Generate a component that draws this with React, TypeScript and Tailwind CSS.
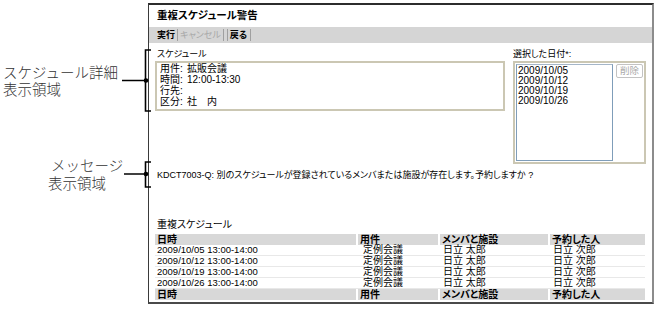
import React from "react";

const JP = "font-['Liberation_Sans','Noto_Sans_CJK_JP',sans-serif] [font-feature-settings:'palt']";

const rows = [
  ["2009/10/05 13:00-14:00", "定例会議", "日立 太郎", "日立 次郎"],
  ["2009/10/12 13:00-14:00", "定例会議", "日立 太郎", "日立 次郎"],
  ["2009/10/19 13:00-14:00", "定例会議", "日立 太郎", "日立 次郎"],
  ["2009/10/26 13:00-14:00", "定例会議", "日立 太郎", "日立 次郎"],
];

function HeaderRow() {
  return (
    <div className="grid grid-cols-[201px_80px_108px_95px] gap-x-[2px] h-[11px] leading-[11px] font-bold">
      <div className="bg-[#d8d8d8] pl-[2px]">日時</div>
      <div className="bg-[#d8d8d8] pl-[2px]">用件</div>
      <div className="bg-[#d8d8d8] pl-[2px]">メンバと施設</div>
      <div className="bg-[#d8d8d8] pl-[2px]">予約した人</div>
    </div>
  );
}

export default function App() {
  return (
    <div className={`w-[656px] h-[316px] bg-white flex text-black overflow-hidden ${JP}`}>
      {/* annotation column */}
      <div className="w-[148px] shrink-0 flex flex-col pt-[49px]">
        <div className="flex h-[63px] items-center">
          <div className="w-[120px] pl-[3px] whitespace-nowrap text-[14.5px] leading-[16.5px] text-[#333] font-light font-['Noto_Sans_CJK_JP',sans-serif] [font-feature-settings:normal]">
            スケジュール詳細
            <br />
            表示領域
          </div>
          <svg width="28" height="63" viewBox="0 0 28 63" overflow="visible" className="relative z-10">
            <path d="M2 31.5 H26" stroke="#000" strokeWidth="1.5" fill="none" />
            <circle cx="26" cy="31.5" r="2.3" fill="#000" />
            <path d="M31 1 H25.5 V62 H31" stroke="#000" strokeWidth="1.6" fill="none" />
          </svg>
        </div>
        <div className="flex h-[34px] items-center mt-[45px]">
          <div className="w-[120px] pl-[48px] whitespace-nowrap text-[14.5px] leading-[18px] text-[#333] font-light font-['Noto_Sans_CJK_JP',sans-serif] [font-feature-settings:normal]">
            <span className="pl-[3px]">メッセージ</span>
            <br />
            表示領域
          </div>
          <svg width="28" height="34" viewBox="0 0 28 34" overflow="visible" className="relative z-10">
            <path d="M4 17 H26" stroke="#000" strokeWidth="1.5" fill="none" />
            <circle cx="26" cy="17" r="2.3" fill="#000" />
            <path d="M31 5 H25.5 V30 H31" stroke="#000" strokeWidth="1.6" fill="none" />
          </svg>
        </div>
      </div>

      {/* window frame */}
      <div className="mt-[3px] w-[506px] h-[301px] shrink-0 bg-white border-t-2 border-t-[#2c2c2c] border-l border-l-[#3a3a3a] border-r-2 border-r-[#8c8c8c] border-b-2 border-b-[#4a4a4a] flex flex-col text-[10px]">
        <div className="h-[22px] flex items-center pl-[8px] text-[10.5px] font-bold">重複スケジュール警告</div>
        <div className="h-[16px] bg-[#d5d5d5] flex items-center pl-[8px] text-[9px] leading-[12px]">
          <span className="font-bold">実行</span>
          <span className="w-px h-[12px] bg-[#a0a0a0] mx-[2px]" />
          <span className="text-[#a8a8a8]">キャンセル</span>
          <span className="w-px h-[12px] bg-[#a0a0a0] ml-[2px]" />
          <span className="w-px h-[12px] bg-[#a0a0a0] ml-[3px] mr-[2px]" />
          <span className="font-bold">戻る</span>
          <span className="w-px h-[12px] bg-[#a0a0a0] ml-[3px]" />
        </div>

        <div className="flex pl-[6px] pt-[4px] gap-[8px]">
          <div className="w-[350px]">
            <div className="h-[14px] leading-[14px] pl-[2px] text-[9px]">スケジュール</div>
            <div className="h-[50px] border-2 border-[#cbc7b3] pl-[3px] leading-[11px]">
              <div className="grid grid-cols-[27px_1fr]">
                <div>用件:</div>
                <div>拡販会議</div>
                <div>時間:</div>
                <div>12:00-13:30</div>
                <div>行先:</div>
                <div></div>
                <div>区分:</div>
                <div>社　内</div>
              </div>
            </div>
          </div>
          <div className="w-[133px]">
            <div className="h-[14px] leading-[14px] text-[9px]">選択した日付*:</div>
            <div className="h-[103px] border-2 border-[#cbc7b3] p-[1px] flex gap-[3px]">
              <div className="w-[97px] h-full border border-[#7f9db9] border-t-[#a5b6c8] pl-[1px] pt-px text-[10px] leading-[10px]">
                <div>2009/10/05</div>
                <div>2009/10/12</div>
                <div>2009/10/19</div>
                <div>2009/10/26</div>
              </div>
              <div className="w-[27px] h-[14px] border border-[#c3c3c3] rounded-[2px] flex items-center justify-center text-[#a9a9a9] text-[9.5px] leading-[10px]">
                削除
              </div>
            </div>
          </div>
        </div>

        <div className="mt-[5px] h-[12px] leading-[12px] pl-[8px] whitespace-nowrap text-[9px]">
          KDCT7003-Q: 別のスケジュールが登録されているメンバまたは施設が存在します。予約しますか ?
        </div>

        <div className="mt-[38px] h-[12px] leading-[12px] pl-[8px]">重複スケジュール</div>

        <div className="mt-[3px] ml-[6px] w-[490px]">
          <HeaderRow />
          {rows.map((r, i) => (
            <div key={i} className="grid grid-cols-[201px_80px_108px_95px] gap-x-[2px] h-[11px] leading-[10px] border-b border-[#e8e8e8]">
              <div className="pl-[2px] text-[9.5px]">{r[0]}</div>
              <div className="pl-[5px]">{r[1]}</div>
              <div className="pl-[3px]">{r[2]}</div>
              <div className="pl-[3px]">{r[3]}</div>
            </div>
          ))}
          <HeaderRow />
        </div>
      </div>
    </div>
  );
}
